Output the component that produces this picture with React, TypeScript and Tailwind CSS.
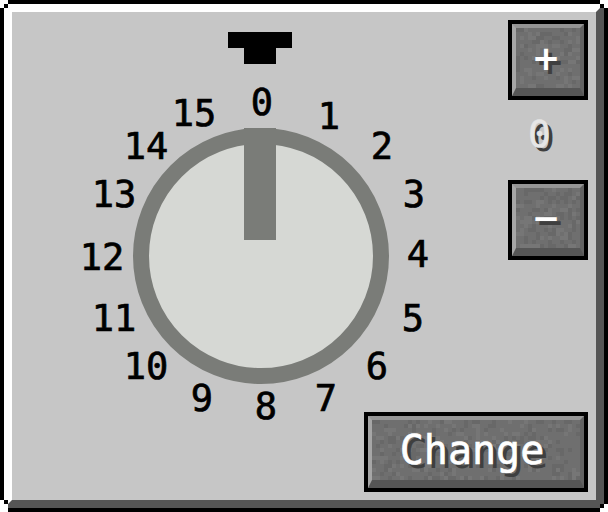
import React from "react";

function mulberry32(a: number) {
  return function () {
    a |= 0;
    a = (a + 0x6d2b79f5) | 0;
    let t = Math.imul(a ^ (a >>> 15), 1 | a);
    t = (t + Math.imul(t ^ (t >>> 7), 61 | t)) ^ t;
    return ((t ^ (t >>> 14)) >>> 0) / 4294967296;
  };
}

function Noise({ w, h, seed }: { w: number; h: number; seed: number }) {
  const rnd = mulberry32(seed);
  const cells: React.ReactElement[] = [];
  for (let y = 0; y < h; y += 4) {
    for (let x = 0; x < w; x += 4) {
      const r = rnd();
      if (r < 0.22) {
        cells.push(<rect key={`${x}-${y}`} x={x} y={y} width={4} height={4} fill="#000" opacity={0.06} />);
      } else if (r > 0.82) {
        cells.push(<rect key={`${x}-${y}`} x={x} y={y} width={4} height={4} fill="#fff" opacity={0.05} />);
      }
    }
  }
  return (
    <svg className="absolute inset-0 pointer-events-none" width={w} height={h} viewBox={`0 0 ${w} ${h}`}>
      {cells}
    </svg>
  );
}

function McButton({
  w,
  children,
  seed,
  textClass,
}: {
  w: number;
  children: React.ReactNode;
  seed: number;
  textClass: string;
}) {
  return (
    <div className="bg-black p-1 h-[80px] shrink-0" style={{ width: w }}>
      <div className="relative h-full w-full bg-[#6f6f6f] border-t-4 border-l-4 border-r-4 border-b-8 border-t-[#959595] border-l-[#a6a6a6] border-r-[#626262] border-b-[#565656] flex items-center justify-center">
        <Noise w={w - 16} h={60} seed={seed} />
        <span className={`relative ${textClass}`}>{children}</span>
      </div>
    </div>
  );
}

const nums: [string, number, number][] = [
  ["0", 250, 90],
  ["1", 317, 104],
  ["2", 370, 134],
  ["3", 402, 182],
  ["4", 406, 242],
  ["5", 401, 306],
  ["6", 365, 354],
  ["7", 314, 386],
  ["8", 254, 394],
  ["9", 190, 386],
  ["10", 134, 354],
  ["11", 102, 306],
  ["12", 90, 245],
  ["13", 102, 182],
  ["14", 134, 134],
  ["15", 182, 101],
];

const glyph =
  "text-[34px] leading-none font-bold text-white [text-shadow:4px_4px_0_#3f3f3f] [font-family:'DejaVu_Sans',sans-serif]";

export default function App() {
  return (
    <div
      className="relative w-[608px] h-[512px] bg-white"
      style={{ fontFamily: '"DejaVu Sans Mono", "Liberation Mono", monospace' }}
    >
      <div className="w-full h-full border-4 border-black">
        <div className="w-full h-full border-t-8 border-l-8 border-t-white border-l-white border-r-8 border-b-8 border-r-[#555555] border-b-[#555555] bg-[#c6c6c6] flex">
          {/* dial canvas */}
          <div className="relative w-[352px] h-full shrink-0">
            <div className="absolute left-[216px] top-[20px] flex flex-col items-center">
              <div className="w-[64px] h-[16px] bg-black" />
              <div className="w-[32px] h-[16px] bg-black" />
            </div>
            <div className="absolute left-[121px] top-[116px] w-[256px] h-[256px] rounded-full border-[16px] border-[#7a7c78] bg-[#d6d8d4] flex justify-center">
              <div className="-mt-[16px] w-[32px] h-[112px] bg-[#7a7c78] -translate-x-[1px]" />
            </div>
            {nums.map(([t, x, y]) => (
              <div
                key={t}
                className="absolute -translate-x-1/2 -translate-y-1/2 text-[37px] leading-none text-black whitespace-nowrap [-webkit-text-stroke:0.7px_black]"
                style={{ left: x, top: y }}
              >
                {t}
              </div>
            ))}
          </div>
          {/* right column */}
          <div className="flex-1 flex flex-col items-end pt-2 pr-2 pb-2">
            <McButton w={80} seed={7} textClass={`-translate-x-[2px] ${glyph}`}>
              +
            </McButton>
            <div className="w-[80px] mt-5 h-7 pl-[20px] text-[38px] leading-[28px] text-[#e6e6e6] [text-shadow:4px_4px_0_#3f3f3f] [-webkit-text-stroke:0.5px_#e6e6e6]">
              0
            </div>
            <div className="mt-8">
              <McButton w={80} seed={13} textClass={`-translate-x-[2px] ${glyph}`}>
                −
              </McButton>
            </div>
            <div className="flex-1" />
            <McButton
              w={224}
              seed={29}
              textClass="-translate-x-[4px] text-[40px] leading-none text-white [text-shadow:4px_4px_0_#3f3f3f] [-webkit-text-stroke:0.6px_white]"
            >
              Change
            </McButton>
          </div>
        </div>
      </div>
      {/* frame corner pixels */}
      <div className="absolute left-0 top-0 w-[8px] h-[4px] bg-white" />
      <div className="absolute left-0 top-[4px] w-[4px] h-[4px] bg-white" />
      <div className="absolute left-[4px] top-[4px] w-[4px] h-[4px] bg-black" />
      <div className="absolute right-0 top-0 w-[8px] h-[4px] bg-white" />
      <div className="absolute right-0 top-[4px] w-[4px] h-[4px] bg-white" />
      <div className="absolute right-[4px] top-[4px] w-[4px] h-[4px] bg-black" />
      <div className="absolute left-0 bottom-0 w-[4px] h-[12px] bg-white" />
      <div className="absolute left-[4px] bottom-0 w-[4px] h-[8px] bg-white" />
      <div className="absolute left-[4px] bottom-[8px] w-[4px] h-[4px] bg-black" />
      <div className="absolute right-0 bottom-0 w-[4px] h-[8px] bg-white" />
      <div className="absolute right-[4px] bottom-0 w-[4px] h-[4px] bg-white" />
      <div className="absolute right-[4px] bottom-[4px] w-[4px] h-[4px] bg-black" />
    </div>
  );
}
